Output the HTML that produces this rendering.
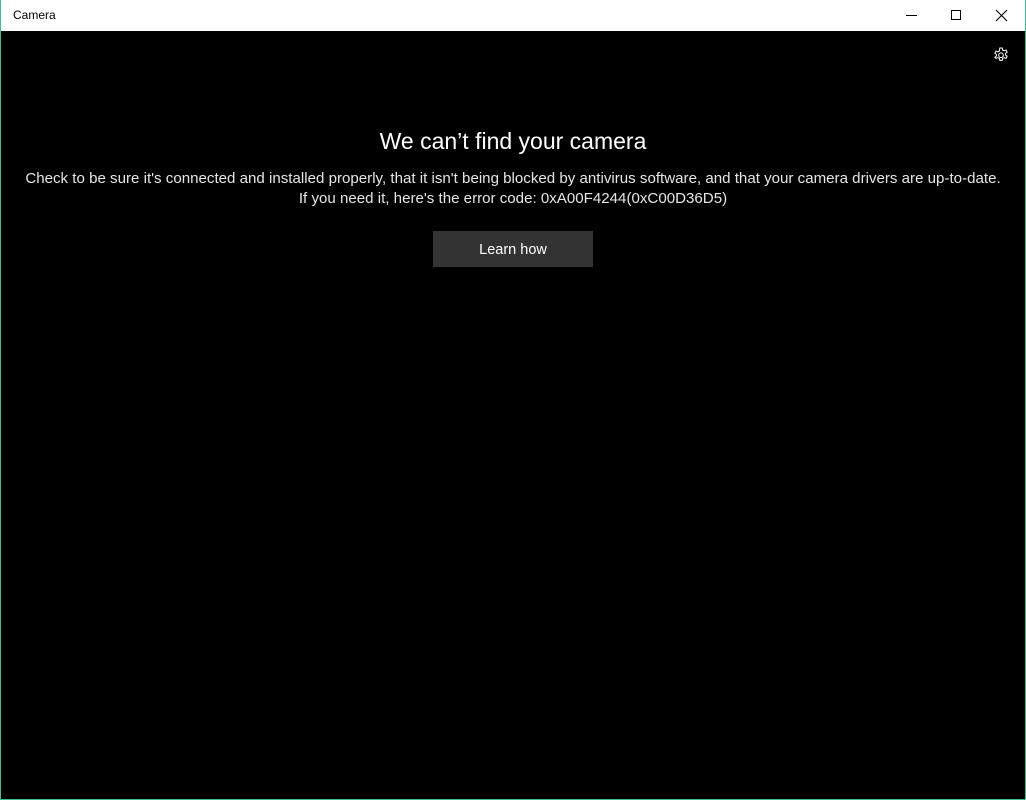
<!DOCTYPE html>
<html><head><style>
html,body{margin:0;padding:0;width:1026px;height:800px;overflow:hidden;background:#000;font-family:"Liberation Sans",sans-serif;}
.win{position:absolute;left:0;top:0;width:1024px;height:799px;border:1px solid #3cc28f;border-top:none;background:#000;}
.tb{position:absolute;left:0;top:0;width:1024px;height:31px;background:#fff;}
.tb .t{position:absolute;left:12px;top:8px;font-size:12px;color:#000;}
.h1{position:absolute;left:0;width:1024px;top:128px;text-align:center;color:#fff;font-size:23px;}
.p{position:absolute;left:0;width:1024px;text-align:center;color:#e6e6e6;font-size:15.1px;white-space:nowrap;}
.btn{position:absolute;left:432px;top:231px;width:160px;height:36px;background:#333;color:#fff;font-size:14.5px;text-align:center;line-height:38px;}
</style></head><body>
<div class="win">
<div class="tb"><span class="t">Camera</span>
<svg style="position:absolute;left:0;top:0" width="1024" height="31">
<line x1="905" y1="15.5" x2="916" y2="15.5" stroke="#000" stroke-width="1"/>
<rect x="950.5" y="10.5" width="9" height="9" fill="none" stroke="#000"/>
<path d="M995 10 L1006 21 M1006 10 L995 21" stroke="#000" stroke-width="1.1"/>
</svg></div>
<svg style="position:absolute;left:992px;top:47px" width="16" height="16" viewBox="0 0 16 16">
<path d="M6.8 1h2.4l.4 2 1.5.8 1.9-.8 1.2 2.1-1.6 1.3v1.6l1.6 1.3-1.2 2.1-1.9-.8-1.5.8-.4 2H6.8l-.4-2-1.5-.8-1.9.8L1.8 10.3l1.6-1.3V7.4L1.8 6.1 3 4l1.9.8 1.5-.8z" fill="none" stroke="#fff" stroke-width="1"/>
<circle cx="8" cy="8.2" r="2.3" fill="none" stroke="#fff" stroke-width="1"/>
</svg>
<div class="h1">We can’t find your camera</div>
<div class="p" style="top:170px">Check to be sure it's connected and installed properly, that it isn't being blocked by antivirus software, and that your camera drivers are up-to-date.</div>
<div class="p" style="top:190px">If you need it, here's the error code: 0xA00F4244(0xC00D36D5)</div>
<div class="btn">Learn how</div>
</div>
</body></html>
